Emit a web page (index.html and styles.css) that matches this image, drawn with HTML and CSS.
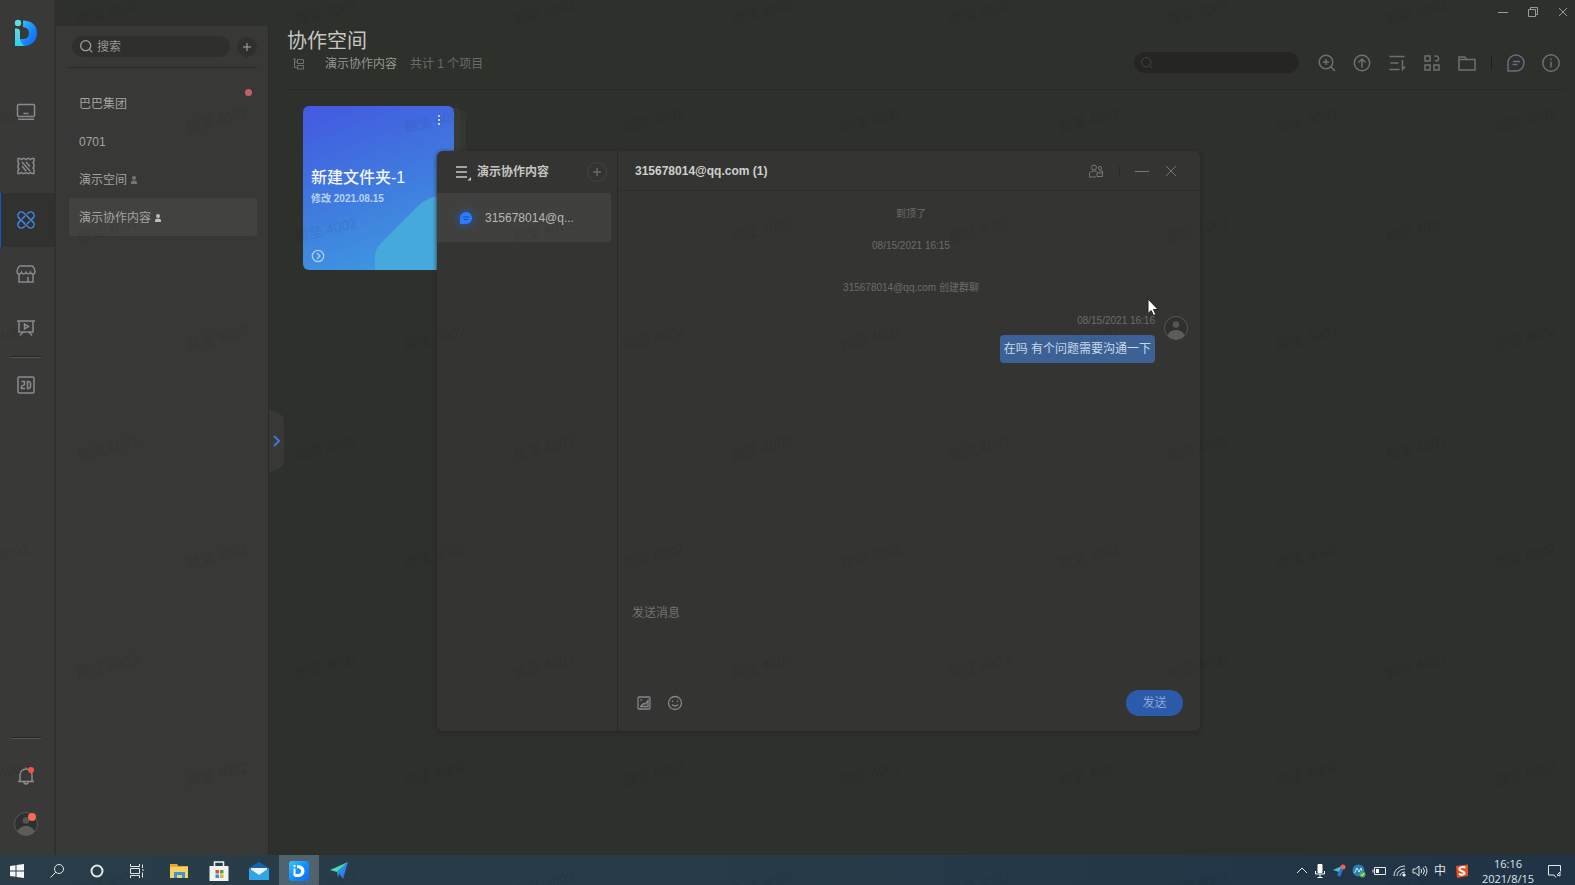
FILE: index.html
```html
<!DOCTYPE html>
<html lang="zh-CN">
<head>
<meta charset="utf-8">
<title>协作空间</title>
<link rel="stylesheet" href="styles.css">
</head>
<body>
<svg class="defs" aria-hidden="true">
  <defs>
    <linearGradient id="teal" x1="0" y1="0" x2="0" y2="1"><stop offset="0" stop-color="#63dbe0"/><stop offset="1" stop-color="#2fd0ee"/></linearGradient>
    <linearGradient id="blue" x1="0" y1="0" x2="1" y2="1"><stop offset="0" stop-color="#3bc8f5"/><stop offset=".6" stop-color="#1684fb"/><stop offset="1" stop-color="#0a62f5"/></linearGradient>
    <linearGradient id="tile" x1="0" y1="0" x2="1" y2="1"><stop offset="0" stop-color="#3cc4f4"/><stop offset=".5" stop-color="#1490fa"/><stop offset="1" stop-color="#0a6cf4"/></linearGradient>
    <symbol id="i-search" viewBox="0 0 18 18"><circle cx="8" cy="8" r="6"/><path d="M12.4 12.4 16 16"/></symbol>
    <symbol id="i-person" viewBox="0 0 8 10"><circle cx="4" cy="3" r="2"/><path d="M1 9V7.500Q1 5.500 4 5.500T7 7.500V9Z"/></symbol>
    <symbol id="i-avatar" viewBox="0 0 24 24"><circle cx="12" cy="12" r="11.500" fill="#2f2f2d" stroke="#595956" stroke-width="1"/><circle cx="12" cy="8.500" r="3.300" fill="#555552" stroke="none"/><path d="M3.500 19.500C5 15.500 8.500 14 12 14s7 1.500 8.500 5.500A11 11 0 0 1 3.500 19.500Z" fill="#5c5c59" stroke="none"/></symbol>
  </defs>
</svg>

<div class="app">
  <aside class="rail">
    <a class="logo" href="#" aria-label="首页">
      <svg width="24" height="28" viewBox="0 0 24 28"><circle cx="4" cy="4" r="3.200" fill="#63dbe0"/><path d="M9 1.500c9 0 14 5 14 12.500S18 27 10 27H5v-7h4c4 0 6-2.500 6-6s-2-5.500-6-6Z" fill="url(#blue)"/><path d="M1 9.500h1.500q3.500 0 3.500 3.500v7q0 3 4 7H1Z" fill="url(#teal)"/></svg>
    </a>
    <nav class="rail-nav">
      <button aria-label="桌面"><svg width="20" height="20" viewBox="0 0 20 20"><rect x="1.500" y="2.500" width="17" height="12" rx="1"/><path d="M7.500 11.500h5M2 17.200h16"/></svg></button>
      <button aria-label="素材"><svg width="20" height="20" viewBox="0 0 20 20"><path d="M2 2.500h2l1.500 1 1.500-1h1.500l1.500 1 1.500-1H13l1.500 1 1.500-1h2v3l-1 1.500 1 1.500v2l-1 1.500 1 1.500v4h-2l-1.500-1-1.500 1h-1.500l-1.500-1-1.500 1H7l-1.500-1-1.500 1H2v-3l1-1.500-1-1.500v-2l1-1.500-1-1.500Z"/><path d="m6 6 8 9M10 6l4 4.500M6 10l4 5"/></svg></button>
      <button class="active" aria-label="协作" aria-current="page"><svg width="20" height="20" viewBox="0 0 20 20"><rect x="-10" y="-3.500" width="20" height="7" rx="3.500" transform="translate(10 10) rotate(45)"/><path d="M5 -3.500H6.500a3.500 3.500 0 0 1 0 7H3.500M-5 3.500H-6.500a3.500 3.500 0 0 1 0-7H-3.500M-2 -3.500H2M-2 3.500H2" transform="translate(10 10) rotate(-45)"/></svg></button>
      <button aria-label="商店"><svg width="20" height="20" viewBox="0 0 20 20"><path d="M3.500 2h13q2.500 2.500 2.500 5.500c0 3-3.500 3.500-4.500.8-1 2.200-3.500 2.200-4.500 0-1 2.200-3.500 2.200-4.500 0C4.500 11 1 10.500 1 7.500Q1 4.500 3.500 2ZM3 10.500V18h14v-7.500M12 18v-5"/></svg></button>
      <button aria-label="演示"><svg width="20" height="20" viewBox="0 0 20 20"><path d="M1 3h18M3 3v11h14V3M7 14l-3 3.500M13 14l3 3.500"/><path d="M8.500 6v5l4-2.500Z"/></svg></button>
    </nav>
    <hr>
    <button aria-label="2D"><svg width="20" height="20" viewBox="0 0 20 20"><rect x="2" y="2" width="16" height="16" rx="1"/><path d="M5.500 6.500h3v3l-3 2v2h3.500M11.500 6.500v7h1.500l1.500-1.500V8L13 6.500Z"/></svg></button>
    <div class="rail-foot">
      <hr>
      <button class="foot-btn" aria-label="通知"><svg width="20" height="20" viewBox="0 0 20 20"><path d="M2 15.500h16M4 15.500V9a6 6 0 0 1 12 0v6.500M8 16a2 2 0 0 0 4 0M10 3V1.500"/></svg><i class="dot"></i></button>
      <button class="foot-btn" aria-label="账户"><svg width="24" height="24"><use href="#i-avatar"/></svg><i class="dot dot-big"></i></button>
    </div>
  </aside>

  <div class="spaces-wrap">
    <aside class="spaces">
      <div class="spaces-top">
        <label class="search"><svg width="15" height="15"><use href="#i-search"/></svg><input type="text" placeholder="搜索" aria-label="搜索"></label>
        <button class="round" aria-label="新建空间"><svg width="10" height="10" viewBox="0 0 10 10"><path d="M5 1v8M1 5h8"/></svg></button>
      </div>
      <nav class="space-list">
        <a href="#">巴巴集团<i class="dot"></i></a>
        <a href="#">0701</a>
        <a href="#">演示空间<svg class="person" width="8" height="10"><use href="#i-person"/></svg></a>
        <a href="#" class="active">演示协作内容<svg class="person" width="8" height="10"><use href="#i-person"/></svg></a>
      </nav>
    </aside>
    <button class="handle" aria-label="展开"><svg width="16" height="64" viewBox="0 0 16 64"><path class="handle-bg" d="M0 0 11 5Q15 7 15 12V52Q15 57 11 59L0 64Z"/><path class="handle-arrow" d="m5 27 5 5-5 5"/></svg></button>
  </div>

  <main class="main">
    <div class="win-controls">
      <button aria-label="最小化"><svg width="12" height="12" viewBox="0 0 12 12"><path d="M1 6.500h10"/></svg></button>
      <button aria-label="还原"><svg width="12" height="12" viewBox="0 0 12 12"><path d="M1.500 3.500h7v7h-7ZM3.500 3.500v-2h7v7h-2"/></svg></button>
      <button aria-label="关闭"><svg width="12" height="12" viewBox="0 0 12 12"><path d="m2 2 8 8M10 2l-8 8"/></svg></button>
    </div>
    <header class="page-head">
      <div class="headings">
        <h1>协作空间</h1>
        <div class="crumbs">
          <svg width="14" height="14" viewBox="0 0 14 14"><path d="M1 2h3M2.500 2v8.500H5M2.500 5H5M5.500 2.500h6v4h-6ZM5.500 8.500h6v3.500h-6Z"/></svg>
          <span class="current">演示协作内容</span>
          <span class="count">共计 1 个项目</span>
        </div>
      </div>
      <div class="tools">
        <label class="tool-search"><svg width="14" height="14"><use href="#i-search"/></svg><input type="text" aria-label="搜索项目"></label>
        <button aria-label="放大"><svg width="18" height="18" viewBox="0 0 18 18"><circle cx="8" cy="8" r="6.800"/><path d="M13 13l4 4M8 5v6M5 8h6"/></svg></button>
        <button aria-label="上传"><svg width="18" height="18" viewBox="0 0 18 18"><circle cx="9" cy="9" r="7.700"/><path d="M9 13.500V5M5.500 8.500 9 5l3.500 3.500"/></svg></button>
        <button aria-label="排序"><svg width="18" height="18" viewBox="0 0 18 18"><path d="M1.500 2.500h15M2.500 9h8M1.500 15.500h10M14.500 6v9.500l2.500-3"/></svg></button>
        <button aria-label="视图"><svg width="18" height="18" viewBox="0 0 18 18"><path d="M2 2h5v5H2ZM2 11h5v5H2ZM11 11h5v5h-5ZM11.500 2.500a2.600 2.600 0 1 1 3 4.300H12"/></svg></button>
        <button aria-label="新建文件夹"><svg width="18" height="18" viewBox="0 0 18 18"><path d="M1 3h6l1.500 2.500H17V16H1ZM1 5.500h8"/></svg></button>
        <i class="sep"></i>
        <button class="chat" aria-label="聊天"><svg width="18" height="18" viewBox="0 0 18 18"><path d="M1 17V9a8 8 0 1 1 8 8ZM6 7.500h7M5.500 10.500h5"/></svg></button>
        <button aria-label="信息"><svg width="18" height="18" viewBox="0 0 18 18"><circle cx="9" cy="9" r="8.200"/><path d="M9 7.500v6M9 4.500v1.500"/></svg></button>
      </div>
    </header>
    <section class="board">
      <article class="folder">
        <svg class="folder-shape" width="80" height="74" viewBox="0 0 80 74" aria-hidden="true"><path d="M1 74V60Q1 53 8 46L44 10Q54 0 68 0H80V68Q80 74 74 74Z"/></svg>
        <button class="more" aria-label="更多"><svg width="4" height="12" viewBox="0 0 4 12"><path d="M1 1h2v2H1ZM1 5h2v2H1ZM1 9h2v2H1Z"/></svg></button>
        <h2>新建文件夹-1</h2>
        <p>修改 2021.08.15</p>
        <a class="open" href="#" aria-label="打开"><svg width="14" height="14" viewBox="0 0 14 14"><circle cx="7" cy="7" r="5.700"/><path d="m6 4 3 3-3 3"/></svg></a>
      </article>
    </section>
  </main>

  <div class="dialog" role="dialog" aria-label="演示协作内容">
    <aside class="chats">
      <header class="chats-head">
        <button class="menu" aria-label="菜单"><svg width="18" height="18" viewBox="0 0 18 18"><path d="M2 4h11M2 9h11M2 14h11"/><path class="corner" d="M17 14v3.500h-3.500Z"/></svg></button>
        <h2>演示协作内容</h2>
        <button class="add" aria-label="新建聊天"><svg width="10" height="10" viewBox="0 0 10 10"><path d="M5 1v8M1 5h8"/></svg></button>
      </header>
      <a href="#" class="chat-item"><svg width="14" height="14" viewBox="0 0 14 14"><path d="M1 13V7a6 6 0 1 1 6 6Z" fill="#2b7bff"/><path d="M4 6h6M5 8.500h4" stroke="#1a4ca8" fill="none"/></svg><span>315678014@q...</span></a>
    </aside>
    <section class="talk">
      <header class="talk-head">
        <h2>315678014@qq.com (1)</h2>
        <div class="talk-tools">
          <button aria-label="成员"><svg width="16" height="16" viewBox="0 0 16 16"><circle cx="6" cy="4.500" r="2.500"/><circle cx="12" cy="5" r="1.600"/><path d="M8 14H1.500v-3q0-3 4.500-3 3 0 3.500 1.500M9 10h5.500v3.500H9ZM11 8h3.500v2"/></svg></button>
          <i class="sep"></i>
          <button aria-label="最小化聊天"><svg width="14" height="14" viewBox="0 0 14 14"><path d="M0 7.500h14"/></svg></button>
          <button aria-label="关闭聊天"><svg width="14" height="14" viewBox="0 0 14 14"><path d="m2 2 10 10M12 2 2 12"/></svg></button>
        </div>
      </header>
      <div class="log">
        <p>到顶了</p>
        <p class="date">08/15/2021 16:15</p>
        <p class="event">315678014@qq.com 创建群聊</p>
        <div class="message">
          <div class="message-body"><time>08/15/2021 16:16</time><div class="bubble">在吗 有个问题需要沟通一下</div></div>
          <svg width="24" height="24"><use href="#i-avatar"/></svg>
        </div>
      </div>
      <form class="composer">
        <textarea placeholder="发送消息" aria-label="发送消息"></textarea>
        <div class="composer-bar">
          <button type="button" aria-label="图片"><svg width="16" height="16" viewBox="0 0 16 16"><rect x="2" y="2" width="12" height="12" rx="1"/><path d="M4 11.500h8V5.500L9.500 9l-2-.5L5 11M4.500 5h1.500"/></svg></button>
          <button type="button" aria-label="表情"><svg width="16" height="16" viewBox="0 0 16 16"><circle cx="8" cy="8" r="6.500"/><path d="M5 9.500q3 3 6 0M5.500 5.500v1.500M10.500 5.500v1.500"/></svg></button>
          <button type="button" class="send">发送</button>
        </div>
      </form>
    </section>
  </div>
</div>

<footer class="taskbar">
  <div class="pinned">
    <button class="sys" aria-label="开始"><svg width="16" height="16" viewBox="0 0 16 16"><path fill="#f4f6f7" d="M1 3 6.500 2.200V7.500H1ZM7.500 2 15 1v6.500H7.500ZM1 8.500h5.500v5.300L1 13ZM7.500 8.500H15V15l-7.500-1Z"/></svg></button>
    <button class="sys" aria-label="搜索"><svg class="line" width="16" height="16" viewBox="0 0 16 16"><circle cx="10" cy="6" r="4.500"/><path d="M6.800 9.200 1.500 14.500"/></svg></button>
    <button class="sys" aria-label="Cortana"><svg class="line" width="16" height="16" viewBox="0 0 16 16"><circle cx="8" cy="8" r="5.500" stroke-width="2"/></svg></button>
    <button class="sys" aria-label="任务视图"><svg class="line" width="16" height="16" viewBox="0 0 16 16"><path d="M1.500 1v2.500h9V1M1.500 5.500h9v5h-9ZM1.500 15v-2.500h9V15M13.500 1.500V5M13.500 9.500v5M13 7h2"/></svg></button>
    <button aria-label="文件资源管理器"><svg width="20" height="18" viewBox="0 0 20 18"><path d="M1 2h7l1.500 2H19v12H1Z" fill="#e9a82e"/><path d="M1 5h18v11H1Z" fill="#f7d066"/><path d="M5 16v-6h11v6h-3v-3H8v3Z" fill="#3a94d8"/></svg></button>
    <button aria-label="应用商店"><svg width="22" height="22" viewBox="0 0 22 22"><path d="M6.500 7V2h9v5" fill="none" stroke="#f2f2f2" stroke-width="1.500"/><path d="M1.500 6h19v15h-19Z" fill="#f2f2f2"/><path d="M7.500 10H11v3.500H7.500Z" fill="#d9552d"/><path d="M12 10h3.500v3.500H12Z" fill="#5ba53a"/><path d="M7.500 14.500H11V18H7.500Z" fill="#2e96d3"/><path d="M12 14.500h3.500V18H12Z" fill="#edb02c"/></svg></button>
    <button aria-label="邮件"><svg width="22" height="22" viewBox="0 0 22 22"><path d="m1 8 10-6 10 6v12H1Z" fill="#1463ae"/><path d="M3 8h16v7H3Z" fill="#eef4f8"/><path d="m1 8 10 7 10-7v12H1Z" fill="#2fa5ea"/></svg></button>
    <button class="active" aria-label="协作空间应用"><svg width="22" height="22" viewBox="0 0 22 22"><rect x="1" y="1" width="20" height="20" rx="3" fill="url(#tile)"/><circle cx="6.500" cy="6" r="1.200" fill="#d8f4ff"/><path d="M5.500 8.500h2V16h-2ZM9 5q7.500.5 7.500 6T10 17H6.500l1-3H10q3 0 3-3t-4-3Z" fill="#fff"/></svg></button>
    <button aria-label="发送"><svg width="20" height="20" viewBox="0 0 20 20"><path d="M1 9 19 1 8 11Z" fill="#4fd6b2"/><path d="m8 11 11-10-5 17-3.500-5Z" fill="#2f80f0"/><path d="m8 11 11-10-9 12-1 4Z" fill="#1e9ed0"/></svg></button>
  </div>
  <div class="tray">
    <svg class="line" width="12" height="16" viewBox="0 0 12 16"><path d="m1 10 5-5 5 5"/></svg>
    <svg width="12" height="16" viewBox="0 0 12 16"><rect x="3.500" y="1" width="5" height="9" rx="1" fill="#fff"/><path d="M1.500 8v3h9V8M6 11v3M3.500 14.500h5" stroke="#fff" fill="none"/></svg>
    <svg width="14" height="16" viewBox="0 0 14 16"><path d="m1 7 9-4-3 6Z" fill="#3cc9c3"/><path d="m7 8 5-4-4 10-3-2Z" fill="#2f72dc"/><circle cx="11" cy="4" r="2.500" fill="#f45d5d"/></svg>
    <svg width="14" height="16" viewBox="0 0 14 16"><circle cx="6.500" cy="7.500" r="6" fill="#2c7fb5"/><path d="M2.500 10 5 5l2 4 2-4 1 3" stroke="#cfe9f5" fill="none"/><circle cx="10.500" cy="11.500" r="3" fill="#4fae45"/><path d="m9 11.500 1.200 1.200 2-2.400" stroke="#fff" fill="none"/></svg>
    <svg class="line" width="14" height="16" viewBox="0 0 14 16"><path d="M2.500 4.500h11v7h-11ZM1 6.500v3"/><path d="M4 6h3v4H4Z" fill="#fff" stroke="none"/></svg>
    <svg class="line" width="14" height="16" viewBox="0 0 14 16"><path d="M2 13C2 7 7 3 13 3M5 13c0-4 3.500-7 8-7M8 13c0-2 2-4 5-4"/><path d="M11 11h2v2h-2Z" fill="#fff"/></svg>
    <svg class="line" width="16" height="16" viewBox="0 0 16 16"><path d="M1 6h2.500L7 3v10L3.500 10H1ZM9 6q1.500 2 0 4M11 4.500q3 3.500 0 7M13 3q4 5 0 10"/></svg>
    <span class="ime">中</span>
    <svg class="sogou" width="14" height="16" viewBox="0 0 14 16"><path d="M1 3 13 1.500 13 13 2 15Z" fill="#e8501f"/><path d="M10.500 4.500C7 3.500 4 4.500 4.500 6.500S9.500 8 9.500 10 6 12 3.800 11" stroke="#fff" stroke-width="2" fill="none"/></svg>
    <div class="clock"><span>16:16</span><span>2021/8/15</span></div>
    <svg class="line" width="16" height="16" viewBox="0 0 16 16"><path d="M7 12H1.500V2.500h12v6M7 12l2 2.500M10 12l3-3v4Z"/></svg>
  </div>
</footer>

<svg class="watermark" aria-hidden="true">
  <defs><pattern id="wm" x="54" y="-40" width="218" height="218" patternUnits="userSpaceOnUse">
    <text transform="translate(54 52) rotate(-14)" text-anchor="middle" dominant-baseline="central">顾坚 4002</text>
    <text transform="translate(163 160) rotate(-14)" text-anchor="middle" dominant-baseline="central">顾坚 4002</text>
  </pattern></defs>
  <rect width="100%" height="100%" fill="url(#wm)"/>
</svg>
<svg class="cursor" width="12" height="19" viewBox="0 0 12 19" aria-hidden="true"><path d="M1 1v14.500l3.200-3 2.300 5 2.300-1.100-2.300-4.900H11Z"/></svg>
</body>
</html>
```

FILE: styles.css
```css
* { box-sizing: border-box; }
body {
  margin: 0;
  height: 100vh;
  display: flex;
  flex-direction: column;
  overflow: hidden;
  position: relative;
  background: #2d302b;
  color: #a3a3a0;
  font: 12px/18px "Liberation Sans", "Noto Sans CJK SC", sans-serif;
}
h1, h2, p { margin: 0; font-weight: 400; }
h2 { font-size: 12px; }
a { color: inherit; text-decoration: none; }
button { padding: 0; border: 0; background: none; color: inherit; font: inherit; display: flex; align-items: center; justify-content: center; }
input, textarea { border: 0; padding: 0; background: none; color: inherit; font: inherit; outline: 0; min-width: 0; width: 100%; }
svg { display: block; flex: none; fill: none; stroke: none; }
.defs { position: absolute; width: 0; height: 0; }
.app { flex: 1; min-height: 0; display: flex; position: relative; }

.rail { width: 56px; background: #393a37; border-right: 2px solid #30312e; display: flex; flex-direction: column; }
.rail button { width: 100%; height: 54px; padding-right: 2px; position: relative; }
.rail button svg { stroke: #8a8a90; stroke-width: 1.5; }
.logo { height: 85px; padding: 19px 0 0 14px; }
.rail .active { background: #31312f; box-shadow: inset 1px 0 #1557c8; }
.rail .active svg { stroke: #3f86e6; }
.rail hr { width: 30px; height: 2px; margin: 1px 0 0 11px; border: 0; background: #252523; border-bottom: 1px solid #555552; }
.rail-foot { margin-top: auto; padding-bottom: 7px; }
.rail-foot hr { margin-bottom: 13px; }
.rail .foot-btn { height: 48px; }
.dot { width: 6px; height: 6px; border-radius: 50%; background: #f2564a; position: absolute; right: 20px; top: 15px; }
.rail .dot-big { width: 8px; height: 8px; background: #f66a5e; right: 18px; top: 13px; }

.spaces-wrap { width: 213px; padding-top: 26px; display: flex; position: relative; }
.spaces { flex: 1; min-width: 0; background: #383936; border-right: 1px solid #2a2b28; padding: 10px 11px 0 13px; }
.spaces-top { display: flex; align-items: center; gap: 7px; padding: 0 0 10px 3px; border-bottom: 1px solid #282826; }
.search { flex: 1; min-width: 0; height: 21px; border-radius: 11px; background: #2f2f2d; display: flex; align-items: center; gap: 3px; padding-left: 7px; }
.search svg { stroke: #a0a09d; stroke-width: 1.5; }
::placeholder { color: #969693; opacity: 1; }
.round { width: 20px; height: 20px; border-radius: 50%; background: #2f2f2d; }
.round svg { stroke: #aaa; }
.space-list { padding-top: 16px; }
.space-list a { height: 38px; padding: 2px 10px 0; border-radius: 3px; display: flex; align-items: center; gap: 3px; position: relative; }
.space-list .active { background: #424340; }
.space-list .dot { right: 5px; top: 5px; background: #c35f6c; width: 7px; height: 7px; }
.person { fill: #777774; }
.active .person { fill: #bcbcba; }
.handle { position: absolute; left: 100%; top: 409px; }
.handle-bg { fill: #383936; }
.handle-arrow { stroke: #3b78dd; stroke-width: 2; }

.main { flex: 1; min-width: 0; }
.win-controls { height: 24px; display: flex; justify-content: flex-end; gap: 18px; padding-right: 6px; }
.win-controls svg { stroke: #9b9b98; }
.page-head { display: flex; justify-content: space-between; align-items: flex-end; margin: 0 10px 0 18px; padding: 3px 0 16px; border-bottom: 1px solid #282a26; }
h1 { font-size: 20px; line-height: 28px; color: #c6c6c3; }
.crumbs { display: flex; align-items: center; gap: 13px; padding-left: 5px; line-height: 18px; }
.crumbs svg { stroke: #6f706c; margin-right: 6px; }
.current { color: #969693; }
.count { color: #6b6c68; }
.tools { display: flex; align-items: center; gap: 17px; padding-right: 5px; }
.tools button svg { stroke: #6f706d; stroke-width: 1.5; }
.tools .chat svg { stroke: #666b88; }
.tool-search { width: 165px; height: 21px; border-radius: 11px; background: #252624; display: flex; align-items: center; gap: 8px; padding-left: 6px; margin-right: 2px; }
.tool-search svg { stroke: #4c4d4a; }
.sep { width: 1px; height: 14px; background: #20211f; margin: 0 -2px; }
.board { padding: 16px 34px; }
.folder {
  width: 151px; height: 164px; border-radius: 6px; padding: 58px 8px 0; position: relative; color: #e6f0fb;
  background: linear-gradient(160deg, #4458e2 0%, #4074de 40%, #3e94e0 85%);
  box-shadow: 8px 0 0 -2px #383a36, 16px 0 0 -4px #343632;
}
.folder-shape { position: absolute; right: 0; bottom: 0; fill: #46a8db; }
.folder h2 { font-size: 16px; line-height: 28px; font-weight: 500; color: #f3f7fc; }
.folder p { font-size: 10px; line-height: 14px; font-weight: 700; color: #b6d2f2; }
.more { position: absolute; right: 13px; top: 8px; }
.more svg { fill: #c4dcf5; }
.open { position: absolute; left: 8px; bottom: 7px; }
.open svg { stroke: #a9d3f2; stroke-width: 1.3; }

.dialog { position: absolute; left: 437px; right: 375px; top: 151px; bottom: 124px; border-radius: 6px; background: #343532; box-shadow: 0 1px 4px #242522; display: flex; }
.chats { width: 181px; border-right: 1px solid #292a28; }
.chats-head { height: 42px; display: flex; align-items: center; padding: 0 10px 0 17px; }
.chats-head h2 { flex: 1; font-weight: 700; color: #c4c4c1; padding-left: 5px; }
.menu svg { stroke: #c8c8c5; stroke-width: 1.5; }
.menu .corner { fill: #c8c8c5; stroke: none; }
.add { width: 20px; height: 20px; border: 1px solid #454642; border-radius: 50%; }
.add svg { stroke: #7d7e7a; }
.chat-item { height: 49px; margin-right: 6px; background: #40413e; border-radius: 0 3px 3px 0; display: flex; align-items: center; padding-left: 22px; gap: 12px; color: #b7b7b4; }
.chat-item svg { filter: drop-shadow(0 0 4px #1a5ed0); }
.talk { flex: 1; min-width: 0; display: flex; flex-direction: column; }
.talk-head { height: 40px; display: flex; align-items: center; justify-content: space-between; padding: 0 22px 0 17px; border-bottom: 1px solid #2e2f2c; }
.talk-head h2 { font-weight: 700; color: #d0d0cd; }
.talk-tools { display: flex; align-items: center; gap: 15px; }
.talk-tools svg { stroke: #777874; }
.talk-tools .sep { height: 10px; background: #2a2b29; margin: 0; }
.log { flex: 1; padding: 14px 12px 12px 16px; font-size: 10px; color: #6b6c68; text-align: center; }
.log .date { padding-top: 14px; }
.log .event { padding-top: 24px; }
.message { display: flex; justify-content: flex-end; align-items: flex-start; gap: 9px; padding-top: 15px; }
.message > svg { margin-top: 4px; }
.message-body { display: flex; flex-direction: column; align-items: flex-end; gap: 5px; }
.bubble { background: #3c6295; color: #c9d8ea; border-radius: 4px; font-size: 12px; line-height: 28px; padding: 0 4px; }
.composer { padding: 0 17px 15px 14px; }
.composer textarea { display: block; height: 86px; resize: none; }
.composer ::placeholder { color: #72736f; }
.composer-bar { display: flex; align-items: center; gap: 15px; padding-left: 4px; }
.composer-bar svg { stroke: #85868a; stroke-width: 1.3; }
.composer .send { margin-left: auto; width: 57px; height: 26px; border-radius: 13px; background: #2c5bab; color: #8faad4; }

.taskbar { height: 30px; flex: none; display: flex; justify-content: space-between; background: linear-gradient(90deg, #283d48, #273c48 40%, #213347); color: #dfe4e8; }
.pinned { display: flex; }
.pinned button { width: 40px; height: 30px; padding-top: 2px; }
.pinned .sys { padding-right: 5px; }
.pinned button:first-child { width: 39px; }
.pinned .active { background: #50636e; }
.line { stroke: #e4e8ea; }
.tray { display: flex; align-items: center; gap: 6px; padding: 2px 12px 0 0; }
.ime { font-size: 12px; }
.sogou { margin-left: 3px; }
.tray .clock { display: flex; flex-direction: column; align-items: center; font-size: 11px; line-height: 15px; width: 66px; font-family: "Open Sans", sans-serif; }

.watermark { position: absolute; inset: 0; width: 100%; height: 100%; pointer-events: none; }
.watermark text { font-size: 14px; fill: #000; fill-opacity: .08; font-family: Roboto, "Noto Sans CJK SC", sans-serif; }
.cursor { position: absolute; left: 1147px; top: 298px; pointer-events: none; }
.cursor path { fill: #fff; stroke: #222; }
```
